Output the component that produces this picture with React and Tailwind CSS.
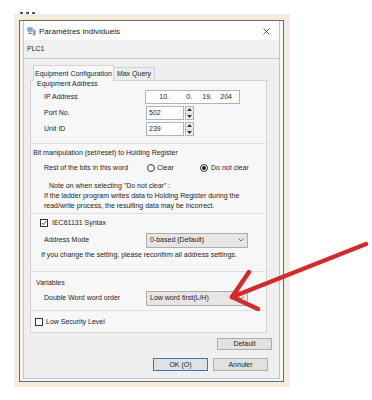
import React from "react";

function Spinner() {
  return (
    <div className="ml-[1px] w-[9px] h-[14px] border border-[#b4b4b4] bg-[#efefef] flex flex-col">
      <div className="flex-1 flex items-center justify-center border-b border-[#d0d0d0]">
        <svg width="5" height="3" viewBox="0 0 5 3"><polygon points="0,3 2.5,0 5,3" fill="#333" /></svg>
      </div>
      <div className="flex-1 flex items-center justify-center">
        <svg width="5" height="3" viewBox="0 0 5 3"><polygon points="0,0 2.5,3 5,0" fill="#333" /></svg>
      </div>
    </div>
  );
}

function Dropdown({ text }) {
  return (
    <div className="w-[102px] h-[15px] bg-[#e6e6e6] border border-[#adadad] flex items-center pl-[3px] pr-[3px]">
      <span className="leading-[8px]">{text}</span>
      <svg className="ml-auto" width="6" height="4" viewBox="0 0 6 4">
        <polyline points="0.5,0.5 3,3 5.5,0.5" fill="none" stroke="#555" strokeWidth="0.8" />
      </svg>
    </div>
  );
}

function Check({ checked }) {
  return (
    <div className="w-[8px] h-[8px] border border-[#333] bg-white flex items-center justify-center">
      {checked && (
        <svg width="6" height="6" viewBox="0 0 6 6">
          <polyline points="0.8,3 2.3,4.6 5.3,1.2" fill="none" stroke="#222" strokeWidth="0.9" />
        </svg>
      )}
    </div>
  );
}

function Dialog() {
  return (
    <div className="w-[265px] h-[362px] border border-[#6a6a6a] bg-[#f4f7fa] px-[3px] pb-[2px] flex flex-col">
      <div className="flex-1 flex flex-col border-x border-b border-[#b8c5d2]">
        {/* Title bar */}
        <div className="h-[19px] bg-white flex items-center pt-[2px] pl-[3px]">
          <svg width="9" height="9" viewBox="0 0 9 9">
            <rect x="0.5" y="0.5" width="5" height="4" fill="#2f7fd0" />
            <rect x="1.2" y="1.2" width="3.6" height="2.6" fill="#7fc0f0" />
            <rect x="2.5" y="4.5" width="1" height="1.5" fill="#777" />
            <rect x="1" y="6" width="4" height="1" fill="#888" />
            <rect x="5.8" y="2.5" width="2.8" height="6" fill="#9a9a9a" />
            <rect x="6.3" y="3.2" width="1.8" height="0.8" fill="#d0d0d0" />
          </svg>
          <span className="ml-[3px] text-[8px] leading-[9px] text-[#1a1a1a]">Paramètres individuels</span>
          <svg className="ml-auto mr-[9px]" width="7" height="7" viewBox="0 0 7 7">
            <line x1="0.5" y1="0.5" x2="6.5" y2="6.5" stroke="#333" strokeWidth="0.8" />
            <line x1="6.5" y1="0.5" x2="0.5" y2="6.5" stroke="#333" strokeWidth="0.8" />
          </svg>
        </div>
        {/* PLC1 band */}
        <div className="h-[19px] bg-[#f0f0f0] border-b border-[#c9c9c9] flex items-center pl-[3px]">
          <span className="text-[7px] leading-[8px]">PLC1</span>
        </div>
        {/* Body */}
        <div className="flex-1 bg-[#efefef] flex flex-col pt-[6px]">
          {/* Tabs */}
          <div className="h-[15px] ml-[9px] flex items-end">
            <div className="relative z-10 w-[81px] h-[16px] -mb-px border-x border-t border-[#d3d3d3] bg-[#f7f7f7] flex items-center justify-center">
              <span className="leading-[8px]">Equipment Configuration</span>
            </div>
            <div className="w-[41px] h-[13px] border-r border-t border-[#d3d3d3] bg-[#ececec] flex items-center justify-center">
              <span className="leading-[8px]">Max Query</span>
            </div>
          </div>
          {/* Panel */}
          <div className="ml-[6px] w-[237px] h-[253px] border border-[#d3d3d3] bg-[#f7f7f7] flex flex-col">
            {/* S1 */}
            <div className="h-[63px] border-b border-[#e0e0e0]">
              <div className="h-[6px] leading-[5px] pl-[6px]">Equipment Address</div>
              <div className="mt-[2px] pl-[13px]">
                <div className="h-[16px] flex items-center">
                  <span className="w-[101px] leading-[8px]">IP Address</span>
                  <div className="w-[95px] h-[14px] bg-white border border-[#b0b3b8] flex items-center leading-[8px]">
                    <span className="w-[23px] text-right">10.</span>
                    <span className="w-[23px] text-right">0.</span>
                    <span className="w-[20px] text-right">19.</span>
                    <span className="w-[20px] text-right">204</span>
                  </div>
                </div>
                <div className="h-[16px] flex items-center">
                  <span className="w-[102px] leading-[8px]">Port No.</span>
                  <div className="w-[38px] h-[14px] bg-white border border-[#b0b3b8] flex items-center pl-[2px] leading-[8px]">502</div>
                  <Spinner />
                </div>
                <div className="h-[16px] flex items-center">
                  <span className="w-[102px] leading-[8px]">Unit ID</span>
                  <div className="w-[38px] h-[14px] bg-white border border-[#b0b3b8] flex items-center pl-[2px] leading-[8px]">239</div>
                  <Spinner />
                </div>
              </div>
            </div>
            {/* S2 */}
            <div className="h-[70px] border-b border-[#e0e0e0] pt-[5px]">
              <div className="h-[8px] leading-[8px] pl-[2px]">Bit manipulation (set/reset) to Holding Register</div>
              <div className="mt-[4px] h-[14px] pl-[13px] flex items-center">
                <span className="w-[103px] leading-[8px]">Rest of the bits in this word</span>
                <div className="w-[53px] flex items-center">
                  <div className="w-[8px] h-[8px] rounded-full border border-[#333] bg-white" />
                  <span className="ml-[2px] leading-[8px]">Clear</span>
                </div>
                <div className="flex items-center">
                  <div className="w-[8px] h-[8px] rounded-full border border-[#333] bg-white flex items-center justify-center">
                    <div className="w-[4px] h-[4px] rounded-full bg-[#222]" />
                  </div>
                  <span className="ml-[3px] leading-[8px]">Do not clear</span>
                </div>
              </div>
              <div className="mt-[6px] leading-[10px]">
                <div className="pl-[18px]">Note on when selecting "Do not clear" :</div>
                <div className="pl-[13px]">If the ladder program writes data to Holding Register during the</div>
                <div className="pl-[13px]">read/write process, the resulting data may be incorrect.</div>
              </div>
            </div>
            {/* S3 */}
            <div className="h-[58px] border-b border-[#e0e0e0] pt-[4px]">
              <div className="h-[10px] pl-[9px] flex items-center">
                <Check checked />
                <span className="ml-[4px] leading-[8px]">IEC61131 Syntax</span>
              </div>
              <div className="mt-[4px] h-[16px] pl-[13px] flex items-center">
                <span className="w-[102px] leading-[8px]">Address Mode</span>
                <Dropdown text="0-based (Default)" />
              </div>
              <div className="mt-[2px] h-[10px] leading-[10px] pl-[10px]">If you change the setting, please reconfirm all address settings.</div>
            </div>
            {/* S4 */}
            <div className="h-[39px] border-b border-[#e0e0e0] pt-[7px]">
              <div className="h-[8px] leading-[8px] pl-[5px]">Variables</div>
              <div className="mt-[3px] h-[16px] pl-[13px] flex items-center">
                <span className="w-[102px] leading-[8px]">Double Word word order</span>
                <Dropdown text="Low word first(L/H)" />
              </div>
            </div>
            {/* Low security */}
            <div className="flex-1 pt-[6px]">
              <div className="h-[10px] pl-[4px] flex items-center">
                <Check />
                <span className="ml-[3px] leading-[8px]">Low Security Level</span>
              </div>
            </div>
          </div>
          {/* Buttons */}
          <div className="mt-[5px] ml-[193px] w-[55px] h-[12px] bg-[#e1e1e1] border border-[#adadad] flex items-center justify-center">
            <span className="leading-[8px]">Default</span>
          </div>
          <div className="mt-[8px] flex">
            <div className="ml-[129px] w-[55px] h-[13px] bg-[#e1e1e1] border border-[#2a7cc7] flex items-center justify-center">
              <span className="leading-[8px]">OK (O)</span>
            </div>
            <div className="ml-[5px] w-[55px] h-[13px] bg-[#e1e1e1] border border-[#adadad] flex items-center justify-center">
              <span className="leading-[8px]">Annuler</span>
            </div>
          </div>
        </div>
      </div>
    </div>
  );
}

export default function App() {
  return (
    <div className="relative w-[372px] h-[400px] bg-white overflow-hidden font-['Liberation_Sans',Arial,sans-serif] text-[7px] text-[#1e1e1e]">
      <div className="h-[14px] flex items-end gap-[3px] pl-[20px]">
        <div className="w-[3px] h-[2px] bg-[#555]" />
        <div className="w-[3px] h-[2px] bg-[#555]" />
        <div className="w-[3px] h-[2px] bg-[#555]" />
      </div>
      <div className="ml-[14px] w-[276px] h-[373px] bg-[#f5ecdc] pl-[5px] pt-[6px]">
        <Dialog />
      </div>
      <svg className="absolute left-0 top-0 pointer-events-none" width="372" height="400" viewBox="0 0 372 400">
        <g stroke="#d62a2a" strokeWidth="4.5" strokeLinecap="round" fill="none">
          <line x1="366" y1="244" x2="232" y2="297" />
          <line x1="232" y1="297" x2="249" y2="272" />
          <line x1="232" y1="297" x2="258" y2="309" />
        </g>
      </svg>
    </div>
  );
}
